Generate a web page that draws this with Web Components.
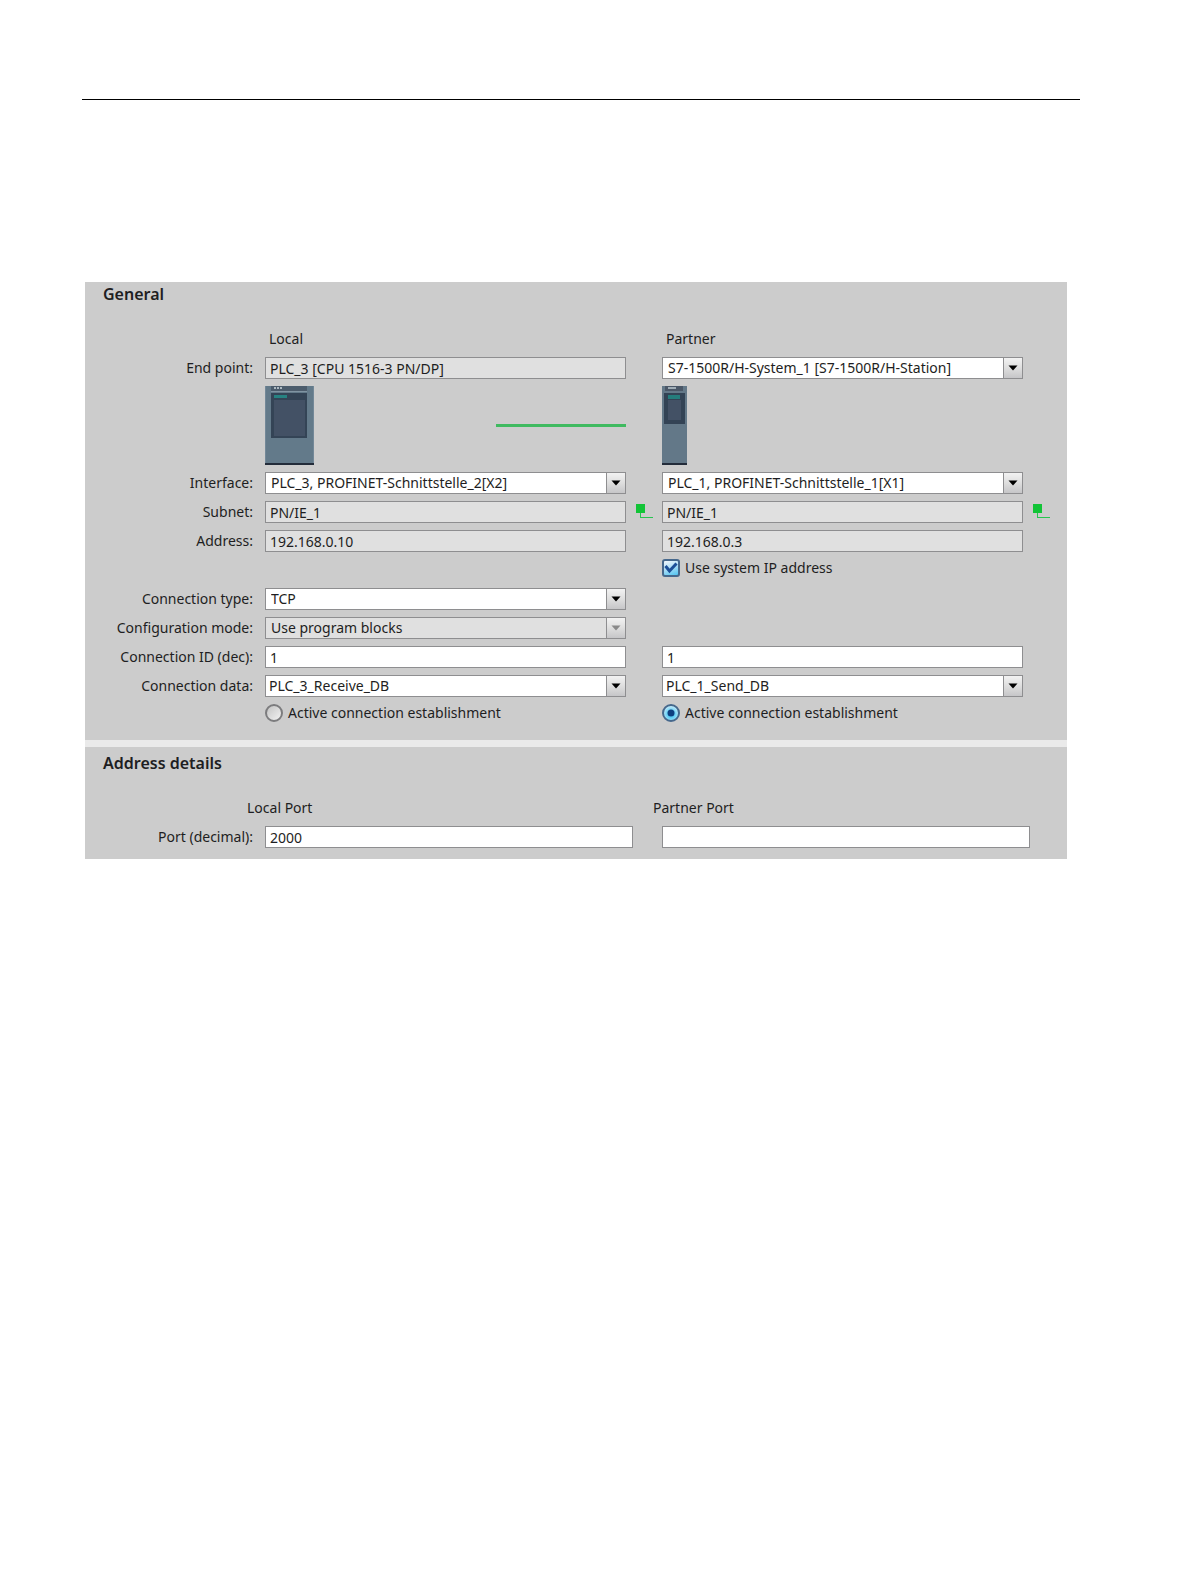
<!DOCTYPE html>
<html lang="en">
<head>
<meta charset="utf-8">
<title>Connection properties</title>
<style>
	body {
		margin: 0;
		background: #fff;
		color: #1e1e22;
		font: 14px/20px "Noto Sans", "Open Sans", sans-serif;
	}
</style>
</head>
<body>

<doc-page>
	<config-panel>
		<config-section heading="General">
			<config-row>
				<span slot="local" class="caption">Local</span>
				<span slot="partner" class="caption">Partner</span>
			</config-row>
			<config-row>
				<label slot="label" for="endLocal">End point:</label>
				<text-field slot="local"><input id="endLocal" value="PLC_3 [CPU 1516-3 PN/DP]" readonly></text-field>
				<drop-down slot="partner"><select aria-label="Partner end point"><option>S7-1500R/H-System_1 [S7-1500R/H-Station]</option></select></drop-down>
			</config-row>
			<config-row tall>
				<device-link slot="local"></device-link>
				<plc-device slot="partner" model="narrow"></plc-device>
			</config-row>
			<config-row>
				<label slot="label" for="ifLocal">Interface:</label>
				<drop-down slot="local"><select id="ifLocal"><option>PLC_3, PROFINET-Schnittstelle_2[X2]</option></select></drop-down>
				<drop-down slot="partner"><select aria-label="Partner interface"><option>PLC_1, PROFINET-Schnittstelle_1[X1]</option></select></drop-down>
			</config-row>
			<config-row>
				<label slot="label" for="netLocal">Subnet:</label>
				<text-field slot="local"><input id="netLocal" value="PN/IE_1" readonly></text-field>
				<subnet-icon slot="local-tail"></subnet-icon>
				<text-field slot="partner"><input aria-label="Partner subnet" value="PN/IE_1" readonly></text-field>
				<subnet-icon slot="partner-tail"></subnet-icon>
			</config-row>
			<config-row>
				<label slot="label" for="addrLocal">Address:</label>
				<text-field slot="local"><input id="addrLocal" value="192.168.0.10" readonly></text-field>
				<text-field slot="partner"><input aria-label="Partner address" value="192.168.0.3" readonly></text-field>
			</config-row>
			<config-row option>
				<check-option slot="partner"><input type="checkbox" id="systemIp" checked><label for="systemIp">Use system IP address</label></check-option>
			</config-row>
			<config-row>
				<label slot="label" for="connType">Connection type:</label>
				<drop-down slot="local"><select id="connType"><option>TCP</option></select></drop-down>
			</config-row>
			<config-row>
				<label slot="label" for="confMode">Configuration mode:</label>
				<drop-down slot="local" disabled><select id="confMode" disabled><option>Use program blocks</option></select></drop-down>
			</config-row>
			<config-row>
				<label slot="label" for="connId">Connection ID (dec):</label>
				<text-field slot="local"><input id="connId" value="1"></text-field>
				<text-field slot="partner"><input aria-label="Partner connection ID" value="1"></text-field>
			</config-row>
			<config-row>
				<label slot="label" for="connData">Connection data:</label>
				<drop-down slot="local" flush><select id="connData"><option>PLC_3_Receive_DB</option></select></drop-down>
				<drop-down slot="partner" flush><select aria-label="Partner connection data"><option>PLC_1_Send_DB</option></select></drop-down>
			</config-row>
			<config-row option>
				<check-option slot="local"><input type="radio" name="active" id="activeLocal"><label for="activeLocal">Active connection establishment</label></check-option>
				<check-option slot="partner"><input type="radio" name="active" id="activePartner" checked><label for="activePartner">Active connection establishment</label></check-option>
			</config-row>
		</config-section>

		<config-section heading="Address details" compact>
			<port-captions><span>Local Port</span><span>Partner Port</span></port-captions>
			<config-row>
				<label slot="label" for="portLocal">Port (decimal):</label>
				<text-field slot="local"><input id="portLocal" value="2000"></text-field>
				<text-field slot="partner"><input aria-label="Partner port"></text-field>
			</config-row>
		</config-section>
	</config-panel>
</doc-page>

<script>
(function() {

	// Registers an element whose shadow root is cloned from the given markup
	function define(name, html, setup) {
		const template = document.createElement('template');
		template.innerHTML = html;

		window.customElements.define(name, class extends HTMLElement {
			constructor() {
				super();
				this.attachShadow({ mode: "open" });
				this.shadowRoot.appendChild(template.content.cloneNode(true));
			}

			connectedCallback() {
				if (setup) setup(this, this.shadowRoot);
			}
		});
	}

	define('doc-page', `
		<style>
			:host { display: block; padding: 99px 0 64px; }
			hr { margin: 0 111px 182px 82px; border: 0; border-top: 1px solid #000; }
			main { margin: 0 124px 0 85px; }
		</style>
		<hr>
		<main><slot></slot></main>
	`);

	define('config-panel', `
		<style>
			:host { display: flex; flex-direction: column; gap: 7px; background: #eaeaea; }
		</style>
		<slot></slot>
	`);

	define('config-section', `
		<style>
			:host { display: block; background: #ccc; padding-bottom: 18px; --tail: 36px; }
			:host([compact]) { padding: 4px 0 11px; --tail: 29px; }
			h2 { margin: 0 0 22px; padding-left: 18px; font-size: 16px; line-height: 24px; font-weight: 600; }
			.rows { display: flex; flex-direction: column; gap: 7px; padding-right: 8px; }
		</style>
		<h2></h2>
		<div class="rows"><slot></slot></div>
	`, function(host, root) {
		root.querySelector('h2').textContent = host.getAttribute('heading');
	});

	define('config-row', `
		<style>
			:host {
				display: grid;
				grid-template-columns: 180px minmax(0, 1fr) minmax(0, 1fr);
				align-items: center;
				height: 22px;
			}
			:host([tall]) { height: 79px; }
			:host([option]) { align-items: start; }
			:host([option]:last-child) { height: 18px; }
			.label { padding-right: 12px; text-align: right; white-space: nowrap; }
			.cell { display: grid; grid-template-columns: minmax(0, 1fr) var(--tail); align-items: center; }
			::slotted(.caption) { padding-left: 4px; }
		</style>
		<div class="label"><slot name="label"></slot></div>
		<div class="cell"><slot name="local"></slot><slot name="local-tail"></slot></div>
		<div class="cell"><slot name="partner"></slot><slot name="partner-tail"></slot></div>
	`);

	define('port-captions', `
		<style>
			:host {
				display: grid;
				grid-template-columns: minmax(0, 1fr) minmax(0, 1fr);
				padding-left: 162px;
				line-height: 22px;
			}
		</style>
		<slot></slot>
	`);

	define('text-field', `
		<style>
			:host { display: block; }
			::slotted(input) {
				display: block;
				box-sizing: border-box;
				width: 100%;
				height: 22px;
				margin: 0;
				padding: 0 4px;
				border: 1px solid #8e8e90;
				border-radius: 0;
				background: #fff;
				color: inherit;
				font: inherit;
				outline: 0;
			}
			::slotted(input[readonly]) { background: #e0e0e0; }
		</style>
		<slot></slot>
	`);

	define('drop-down', `
		<style>
			:host { display: grid; grid-template-columns: minmax(0, 1fr) 20px; }
			::slotted(select) {
				grid-area: 1 / 1 / 2 / 3;
				appearance: none;
				box-sizing: border-box;
				width: 100%;
				height: 22px;
				margin: 0;
				padding: 0 24px 0 5px;
				border: 1px solid #8e8e90;
				border-radius: 0;
				background: #fff;
				color: inherit;
				font: inherit;
				outline: 0;
			}
			:host([flush]) ::slotted(select) { padding-left: 3px; }
			:host([disabled]) ::slotted(select) { background: #e0e0e0; opacity: 1; }
			.arrow {
				grid-area: 1 / 2;
				z-index: 1;
				display: flex;
				align-items: center;
				justify-content: center;
				border: 1px solid #8e8e90;
				background: linear-gradient(#f2f2f2, #dedede 50%, #c6c6c8);
				color: #000;
				pointer-events: none;
			}
			:host([disabled]) .arrow { color: #8a8a8a; }
		</style>
		<slot></slot>
		<span class="arrow"><svg width="10" height="6" viewBox="0 0 10 6"><path d="M0.5 0.5h9L5 5.5z" fill="currentColor"/></svg></span>
	`);

	define('check-option', `
		<style>
			:host { display: grid; grid-template-columns: 18px 1fr; column-gap: 5px; align-items: center; height: 18px; line-height: 18px; }
			::slotted(input) {
				grid-area: 1 / 1;
				appearance: none;
				box-sizing: border-box;
				width: 18px;
				height: 18px;
				margin: 0;
				border: 2px solid #7c7c7e;
				background: linear-gradient(135deg, #c4c4c4, #f2f2f2);
			}
			::slotted(input[type=radio]) { border-radius: 50%; }
			::slotted(input[type=checkbox]) { border-radius: 3px; }
			::slotted(input:checked) { border-color: #46688c; }
			::slotted(input[type=checkbox]:checked) { background: linear-gradient(160deg, #f4f8fc, #a9dcf6 50%, #4fc4f0); }
			::slotted(input[type=radio]:checked) { background: radial-gradient(circle at 50% 60%, #5ccdf5 30%, #bfe9fa 75%); }
			::slotted(label) { grid-area: 1 / 2; white-space: nowrap; }
			svg { grid-area: 1 / 1; z-index: 1; display: none; pointer-events: none; }
			svg.on { display: block; }
		</style>
		<slot></slot>
		<svg class="checkbox" width="18" height="18" viewBox="0 0 18 18"><path d="M3.5 7l4 5L14.5 4.5" fill="none" stroke="#1c4f98" stroke-width="3"/></svg>
		<svg class="radio" width="18" height="18" viewBox="0 0 18 18"><circle cx="9" cy="9" r="3.5" fill="#0e3f80"/></svg>
	`, function(host, root) {
		const update = function() {
			const input = host.querySelector('input');
			root.querySelector('.' + input.type).classList.toggle('on', input.checked);
		};
		document.addEventListener('change', update);
		update();
	});

	define('subnet-icon', `
		<style>
			:host { display: block; padding-left: 10px; }
			svg { display: block; }
		</style>
		<svg width="18" height="18" viewBox="0 0 18 18">
			<path d="M4 9h1v5h12v1H4z" fill="#28c450"/>
			<path d="M0 1h9v9H0z" fill="#12c437"/>
		</svg>
	`);

	define('plc-device', `
		<style>
			:host { display: block; }
			svg { display: none; }
			:host([model=wide]) .wide, :host([model=narrow]) .narrow { display: block; }
		</style>
		<svg class="wide" width="49" height="79" viewBox="0 0 49 79">
			<path d="M0 0h49v79H0z" fill="#637a8a"/>
			<path d="M0 0h1v79H0zM48 0h1v79h-1z" fill="#738898"/>
			<path d="M6 0h36v6H6z" fill="#4c5c6c"/>
			<path d="M6 5h36v1H6z" fill="#8094a2"/>
			<path d="M9 1h2v2H9zM12 1h2v2h-2zM15 1h2v2h-2z" fill="#aebac2"/>
			<path d="M6 7h36v45H6z" fill="#344456"/>
			<path d="M9 14h31v36H9z" fill="#435165"/>
			<path d="M9 9h13v3H9z" fill="#278282"/>
			<path d="M0 77h49v2H0z" fill="#232c3a"/>
		</svg>
		<svg class="narrow" width="25" height="79" viewBox="0 0 25 79">
			<path d="M0 0h25v79H0z" fill="#637888"/>
			<path d="M3 0h18v5H3z" fill="#4a5767"/>
			<path d="M6 1h8v2H6z" fill="#a0adb6"/>
			<path d="M2 7h21v31H2z" fill="#334355"/>
			<path d="M6 14h13v20H6z" fill="#435165"/>
			<path d="M6 9h12v4H6z" fill="#247d7c"/>
			<path d="M0 77h25v2H0z" fill="#232c3a"/>
		</svg>
	`);

	define('device-link', `
		<style>
			:host { display: flex; align-items: center; justify-content: space-between; }
			.line { width: 130px; height: 3px; background: #3fba60; }
		</style>
		<plc-device model="wide"></plc-device>
		<span class="line"></span>
	`);

})();
</script>
</body>
</html>
